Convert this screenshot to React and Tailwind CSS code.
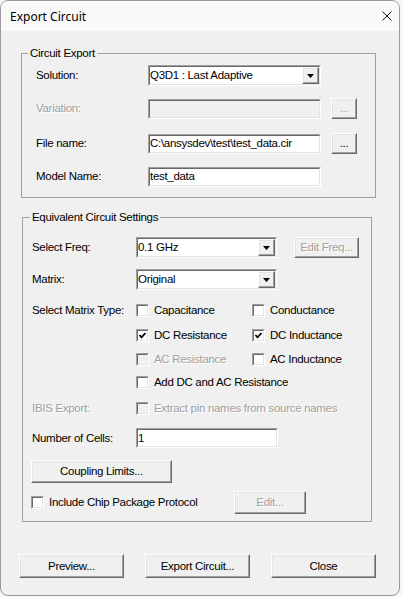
import React from "react";

// classic win32 3d borders
const Sunken = ({ className = "", disabled, children }) => (
  <div
    className={`border border-t-[#a0a0a0] border-l-[#a0a0a0] border-r-white border-b-white ${className}`}
  >
    <div
      className={`h-full flex items-center border border-t-[#696969] border-l-[#696969] border-r-[#e3e3e3] border-b-[#e3e3e3] ${
        disabled ? "bg-[#f0f0f0]" : "bg-white"
      }`}
    >
      {children}
    </div>
  </div>
);

const Btn = ({ className = "", disabled, children }) => (
  <button
    className={`block p-0 bg-[#f0f0f0] border border-t-white border-l-white border-r-[#696969] border-b-[#696969] ${className}`}
  >
    <div
      className={`h-full flex items-center justify-center whitespace-nowrap border border-t-[#e3e3e3] border-l-[#e3e3e3] border-r-[#a0a0a0] border-b-[#a0a0a0] ${
        disabled ? "text-[#a0a0a0] [text-shadow:1px_1px_0_#fff]" : "text-black"
      }`}
    >
      {children}
    </div>
  </button>
);

const Combo = ({ className = "", value }) => (
  <Sunken className={className}>
    <span className="flex-1 truncate">{value}</span>
    <Btn className="w-[17px] h-full">
      <svg width="7" height="4" viewBox="0 0 7 4">
        <polygon points="0,0 7,0 3.5,4" fill="#000" />
      </svg>
    </Btn>
  </Sunken>
);

const Check = ({ checked, disabled, label, className = "" }) => (
  <div className={`flex items-center ${className}`}>
    <Sunken className="w-[13px] h-[13px] shrink-0" disabled={disabled}>
      {checked && (
        <svg width="9" height="9" viewBox="0 0 9 9">
          <polyline
            points="1.5,4 3.5,6.3 7.5,2"
            fill="none"
            stroke="#000"
            strokeWidth="1.8"
          />
        </svg>
      )}
    </Sunken>
    <span
      className={`ml-[5px] whitespace-nowrap ${
        disabled ? "text-[#a0a0a0] [text-shadow:1px_1px_0_#fff]" : ""
      }`}
    >
      {label}
    </span>
  </div>
);

const muted = "text-[#a0a0a0] [text-shadow:1px_1px_0_#fff]";

export default function App() {
  return (
    <div className="w-[403px] h-[597px] bg-[#f7f7f7] overflow-hidden font-['Liberation_Sans',Arial,sans-serif] text-[11.5px] tracking-[-0.3px] leading-[15px] text-black">
      <div className="w-[400px] h-[596px] rounded-[8px] border border-[#9a9a9a] bg-[#f0f0f0] overflow-hidden flex flex-col">
        {/* title bar */}
        <div className="h-[30px] shrink-0 bg-[#f9f9f9] flex items-center justify-between pl-[9px] pr-[7px]">
          <span className="font-['Noto_Sans',sans-serif] text-[12px] tracking-normal">Export Circuit</span>
          <svg width="10" height="10" viewBox="0 0 10 10">
            <path d="M0.5 0.5 L9.5 9.5 M9.5 0.5 L0.5 9.5" stroke="#1a1a1a" strokeWidth="1" />
          </svg>
        </div>

        {/* Circuit Export */}
        <fieldset className="ml-[20px] mt-[15px] w-[355px] min-w-0 border border-[#a0a0a0] pb-[10px]">
          <legend className="ml-[6px] px-[2px] leading-[15px]">Circuit Export</legend>

          <div className="mt-[4px] h-[21px] flex items-center pl-[14px]">
            <span className="w-[112px]">Solution:</span>
            <Combo className="w-[173px] h-[21px]" value="Q3D1 : Last Adaptive" />
          </div>

          <div className="mt-[12px] h-[21px] flex items-center pl-[14px]">
            <span className={`w-[112px] ${muted}`}>Variation:</span>
            <Sunken className="w-[173px] h-[20px]" disabled />
            <Btn className="ml-[10px] w-[26px] h-[21px]" disabled>
              ...
            </Btn>
          </div>

          <div className="mt-[14px] h-[21px] flex items-center pl-[14px]">
            <span className="w-[112px]">File name:</span>
            <Sunken className="w-[173px] h-[20px]">
              <span className="whitespace-nowrap">C:\ansysdev\test\test_data.cir</span>
            </Sunken>
            <Btn className="ml-[10px] w-[26px] h-[21px]">...</Btn>
          </div>

          <div className="mt-[12px] h-[21px] flex items-center pl-[14px]">
            <span className="w-[112px]">Model Name:</span>
            <Sunken className="w-[173px] h-[20px]">
              <span>test_data</span>
            </Sunken>
          </div>
        </fieldset>

        {/* Equivalent Circuit Settings */}
        <fieldset className="ml-[21px] mt-[12px] w-[350px] min-w-0 border border-[#a0a0a0] pb-[7px]">
          <legend className="ml-[7px] px-[2px] leading-[15px]">Equivalent Circuit Settings</legend>

          <div className="mt-[12px] h-[21px] flex items-center pl-[9px]">
            <span className="w-[104px]">Select Freq:</span>
            <Combo className="w-[141px] h-[21px]" value="0.1 GHz" />
            <Btn className="ml-[17px] w-[65px] h-[21px]" disabled>
              Edit Freq...
            </Btn>
          </div>

          <div className="mt-[11px] h-[21px] flex items-center pl-[9px]">
            <span className="w-[104px]">Matrix:</span>
            <Combo className="w-[141px] h-[21px]" value="Original" />
          </div>

          <div className="mt-[12px] h-[17px] flex items-center pl-[9px]">
            <span className="w-[104px] whitespace-nowrap">Select Matrix Type:</span>
            <Check className="w-[116px]" label="Capacitance" />
            <Check label="Conductance" />
          </div>

          <div className="mt-[8px] h-[17px] flex items-center pl-[113px]">
            <Check className="w-[116px]" checked label="DC Resistance" />
            <Check checked label="DC Inductance" />
          </div>

          <div className="mt-[7px] h-[17px] flex items-center pl-[113px]">
            <Check className="w-[116px]" disabled label="AC Resistance" />
            <Check label="AC Inductance" />
          </div>

          <div className="mt-[6px] h-[17px] flex items-center pl-[113px]">
            <Check label="Add DC and AC Resistance" />
          </div>

          <div className="mt-[9px] h-[17px] flex items-center pl-[9px]">
            <span className={`w-[104px] ${muted}`}>IBIS Export:</span>
            <Check disabled label="Extract pin names from source names" />
          </div>

          <div className="mt-[11px] h-[20px] flex items-center pl-[9px]">
            <span className="w-[104px]">Number of Cells:</span>
            <Sunken className="w-[142px] h-[20px]">
              <span>1</span>
            </Sunken>
          </div>

          <Btn className="mt-[12px] ml-[8px] w-[141px] h-[23px]">Coupling Limits...</Btn>

          <div className="mt-[8px] h-[23px] flex items-center pl-[8px]">
            <Check className="w-[203px]" label="Include Chip Package Protocol" />
            <Btn className="w-[72px] h-[23px]" disabled>
              Edit...
            </Btn>
          </div>
        </fieldset>

        {/* bottom buttons */}
        <div className="mt-[32px] ml-[18px] flex gap-[21px]">
          <Btn className="w-[105px] h-[24px]">Preview...</Btn>
          <Btn className="w-[105px] h-[24px]">Export Circuit...</Btn>
          <Btn className="w-[105px] h-[24px]">Close</Btn>
        </div>
      </div>
    </div>
  );
}
